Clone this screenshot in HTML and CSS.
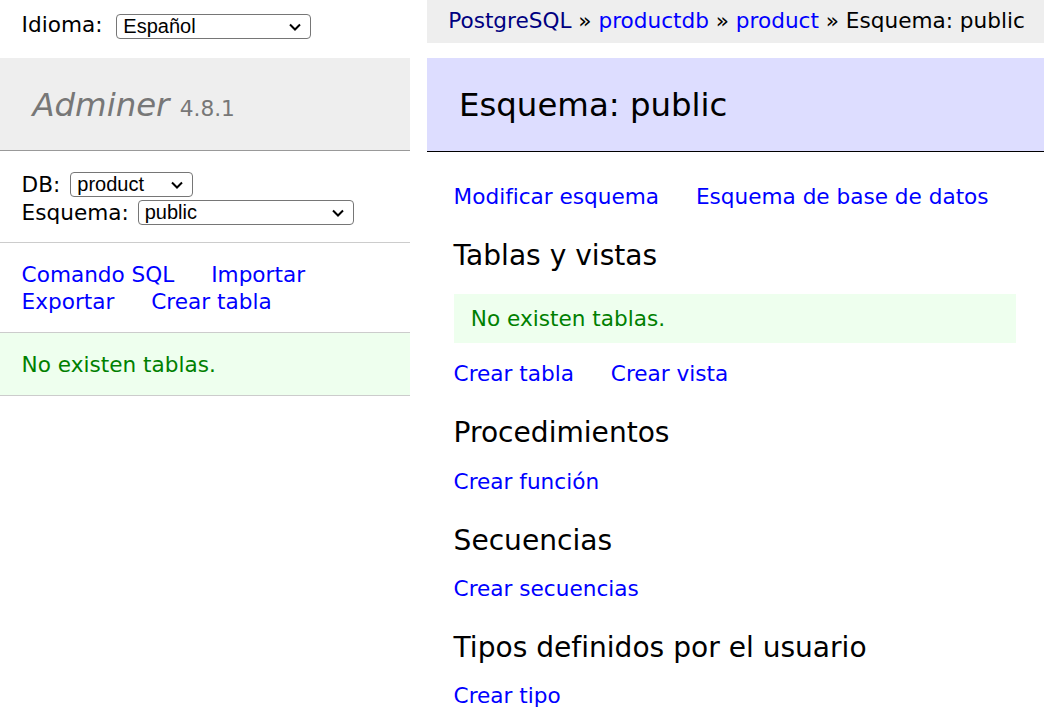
FILE: index.html
```html
<!DOCTYPE html>
<html lang="es">
<head>
<meta charset="utf-8">
<title>Esquema: public - Adminer</title>
<link rel="stylesheet" href="styles.css">
</head>
<body>
<div class="page">
  <aside class="side">
    <form class="lang">Idioma: <span class="selwrap"><select class="sel sel-lang"><option>Español</option></select><svg class="chev" width="12" height="8" viewBox="0 0 12 8"><path d="M1 1.5 L6 6.5 L11 1.5" fill="none" stroke="#000" stroke-width="2"/></svg></span></form>
    <div class="menu">
      <h1 class="logo"><a class="logo-link" href="#">Adminer</a> <span class="version">4.8.1</span></h1>
      <div class="menu-block dbs">
        <div class="field">DB: <span class="selwrap"><select class="sel sel-db"><option>product</option></select><svg class="chev" width="12" height="8" viewBox="0 0 12 8"><path d="M1 1.5 L6 6.5 L11 1.5" fill="none" stroke="#000" stroke-width="2"/></svg></span></div>
        <div class="field">Esquema: <span class="selwrap"><select class="sel sel-ns"><option>public</option></select><svg class="chev" width="12" height="8" viewBox="0 0 12 8"><path d="M1 1.5 L6 6.5 L11 1.5" fill="none" stroke="#000" stroke-width="2"/></svg></span></div>
      </div>
      <p class="menu-block links">
        <a href="#">Comando SQL</a>
        <a href="#">Importar</a>
        <a href="#">Exportar</a>
        <a href="#">Crear tabla</a>
      </p>
      <p class="menu-block message">No existen tablas.</p>
    </div>
  </aside>
  <main class="main">
    <p class="breadcrumb"><a class="visited" href="#">PostgreSQL</a> » <a href="#">productdb</a> » <a href="#">product</a> » Esquema: public</p>
    <div class="content">
      <h2 class="title">Esquema: public</h2>
      <div class="body">
        <p class="links"><a href="#">Modificar esquema</a> <a href="#">Esquema de base de datos</a></p>
        <h3>Tablas y vistas</h3>
        <p class="message">No existen tablas.</p>
        <p class="links"><a href="#">Crear tabla</a> <a href="#">Crear vista</a></p>
        <h3>Procedimientos</h3>
        <p class="links"><a href="#">Crear función</a></p>
        <h3>Secuencias</h3>
        <p class="links"><a href="#">Crear secuencias</a></p>
        <h3>Tipos definidos por el usuario</h3>
        <p class="links"><a href="#">Crear tipo</a></p>
      </div>
    </div>
  </main>
</div>
</body>
</html>
```
FILE: styles.css
```css
html, body {
  margin: 0;
  padding: 0;
  overflow: hidden;
  background: #fff;
}
body {
  color: #000;
  font: 21.6px/27px "DejaVu Sans", Verdana, sans-serif;
}
a {
  color: blue;
  text-decoration: none;
}
a.visited {
  color: navy;
}
.page {
  display: flex;
  align-items: flex-start;
}
.side {
  width: 410.4px;
  flex: none;
}
.lang {
  margin: 0;
  padding: 6.48px 21.6px;
  line-height: 38.88px;
  height: 38.88px;
}
.selwrap {
  position: relative;
  display: inline-block;
  vertical-align: middle;
  line-height: 0;
}
.sel {
  appearance: none;
  -webkit-appearance: none;
  font: 20px/23px "Liberation Sans", Arial, sans-serif;
  color: #000;
  background: #fff;
  border: 1px solid #767676;
  border-radius: 4px;
  height: 25px;
  padding: 0 26px 0 6px;
  margin: 0;
  box-sizing: border-box;
}
.chev {
  position: absolute;
  right: 10px;
  top: 9px;
  pointer-events: none;
}
.lang .selwrap { margin-left: 7px; }
.sel-lang { width: 195px; }
.sel-db { width: 123px; }
.sel-ns { width: 216px; }
.menu {
  margin-top: 6.36px;
}
.logo {
  margin: 0;
  font-size: 32.4px;
  line-height: 40.5px;
  height: 40.5px;
  font-weight: normal;
  padding: 26.5px 32.4px 25.3px;
  background: #eee;
  border-bottom: 1px solid #999;
  color: #777;
}
.logo-link {
  color: #777;
  font-style: italic;
}
.version {
  font-size: 21.7px;
  line-height: 1;
  color: #777;
}
.menu-block {
  margin: 0;
  padding: 17.28px 21.6px;
  border-bottom: 1px solid #ccc;
}
.dbs {
  padding-top: 19px;
  padding-bottom: 16px;
}
.links.menu-block {
  padding-top: 18px;
  padding-bottom: 17px;
}
.field {
  height: 28px;
  display: flex;
  align-items: center;
  gap: 7px;
}
.field:first-child .selwrap { margin-left: 3px; }
.field + .field .selwrap { margin-left: 2px; }
.links a {
  white-space: nowrap;
  margin-right: 30px;
}
.message {
  color: green;
  background: #efe;
}
.main {
  flex: 1;
  min-width: 0;
  margin-left: 16.2px;
}
.breadcrumb {
  margin: 0;
  white-space: nowrap;
  background: #eee;
  height: 41.7px;
  line-height: 38.88px;
  padding: 1.5px 21.6px 0;
}
.content {
  padding-top: 15px;
}
.title {
  margin: 0;
  font-size: 32.4px;
  line-height: 40.5px;
  font-weight: normal;
  padding: 27px 32.4px 24.84px;
  background: #ddf;
  border-bottom: 1px solid #000;
}
.body {
  padding: 1px 0 30px 27px;
}
.body > p {
  margin: 17.28px 0 0;
}
.body > p:first-child {
  margin-top: 30px;
}
.body h3 {
  font-weight: normal;
  font-size: 28.08px;
  line-height: 35.1px;
  margin: 28.08px 0 0;
}
.body > .message {
  margin: 21.6px 28px 0 0;
  padding: 10.8px 17.28px;
}
```
